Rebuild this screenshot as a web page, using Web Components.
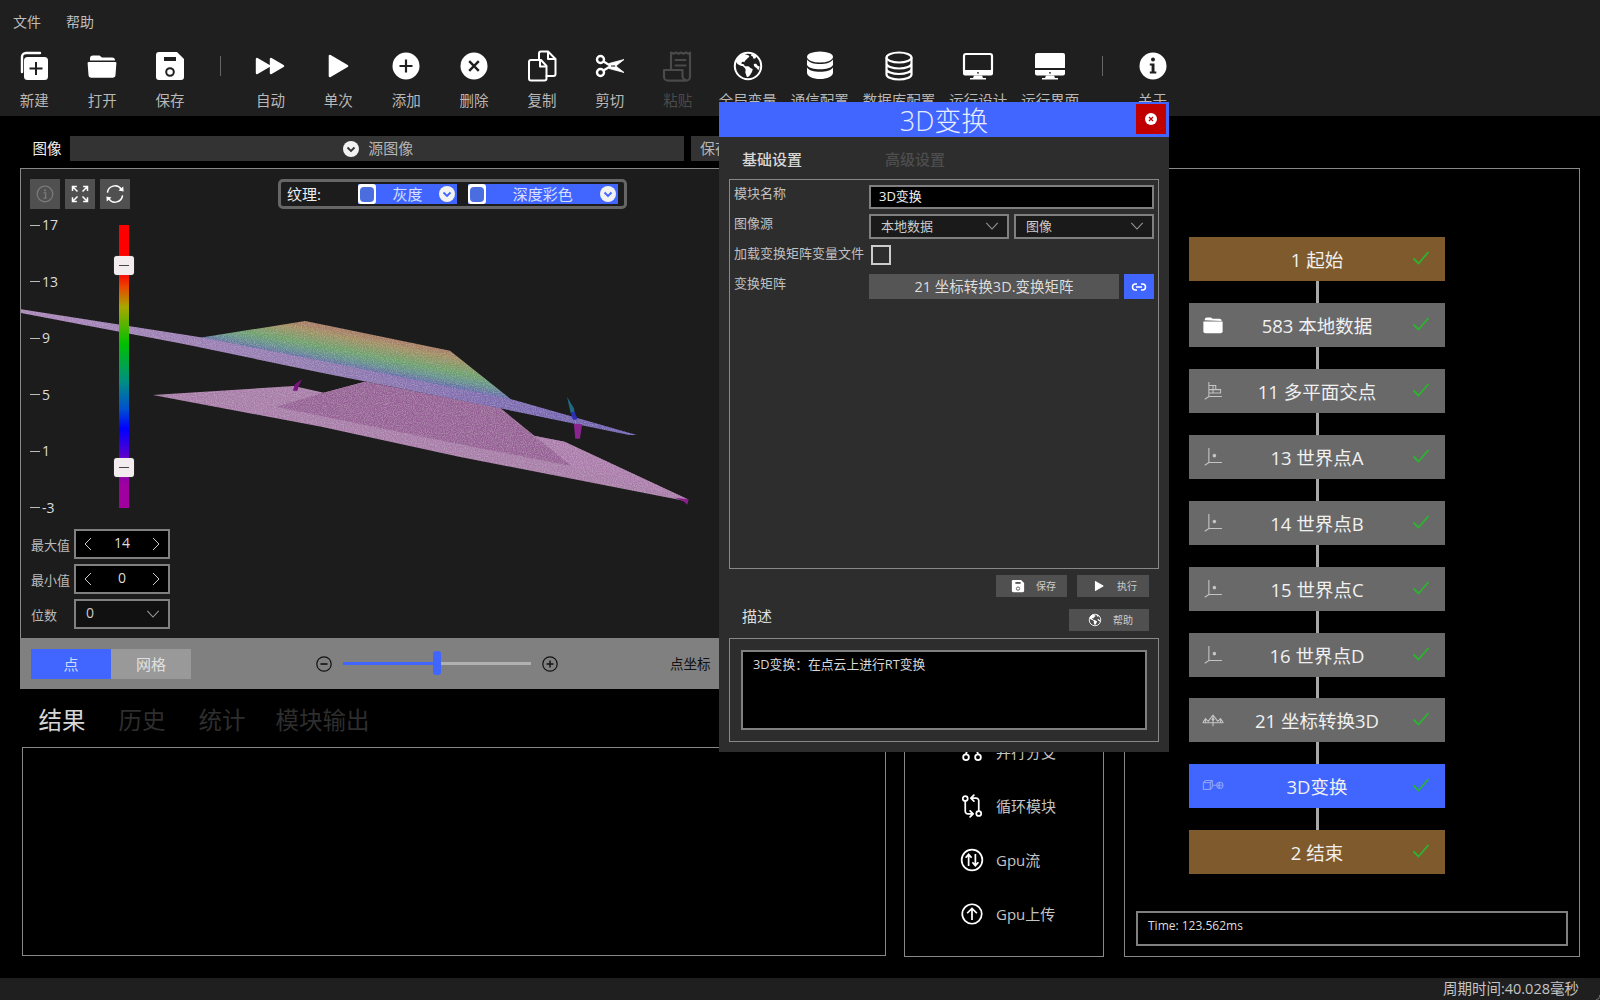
<!DOCTYPE html>
<html lang="zh-CN">
<head>
<meta charset="utf-8">
<title>3D变换</title>
<style>
html,body{margin:0;padding:0;height:100%;background:#000;overflow:hidden}
body{font-family:"Open Sans","Noto Sans CJK SC",sans-serif;color:#ccc}
</style>
</head>
<body>
<app-shell>
  <app-menu><span>文件</span><span>帮助</span></app-menu>
  <app-toolbar>
    <tool-btn icon="new" label="新建"></tool-btn>
    <tool-btn icon="open" label="打开"></tool-btn>
    <tool-btn icon="save" label="保存"></tool-btn>
    <tool-sep></tool-sep>
    <tool-btn icon="auto" label="自动"></tool-btn>
    <tool-btn icon="play" label="单次"></tool-btn>
    <tool-btn icon="add" label="添加"></tool-btn>
    <tool-btn icon="del" label="删除"></tool-btn>
    <tool-btn icon="copy" label="复制"></tool-btn>
    <tool-btn icon="cut" label="剪切"></tool-btn>
    <tool-btn icon="paste" label="粘贴" dim></tool-btn>
    <tool-btn icon="globe" label="全局变量"></tool-btn>
    <tool-btn icon="dbfill" label="通信配置"></tool-btn>
    <tool-btn icon="db" label="数据库配置"></tool-btn>
    <tool-btn icon="mon" label="运行设计"></tool-btn>
    <tool-btn icon="monfill" label="运行界面"></tool-btn>
    <tool-sep></tool-sep>
    <tool-btn icon="info" label="关于"></tool-btn>
  </app-toolbar>
  <main-area>
    <left-col>
      <image-header></image-header>
      <image-panel></image-panel>
      <tab-strip><b>结果</b><span>历史</span><span>统计</span><span>模块输出</span></tab-strip>
      <result-box></result-box>
    </left-col>
    <module-list>
      <module-item icon="branch">并行分支</module-item>
      <module-item icon="loop">循环模块</module-item>
      <module-item icon="updown">Gpu流</module-item>
      <module-item icon="up">Gpu上传</module-item>
    </module-list>
    <flow-chart>
      <flow-node kind="brand">1 起始</flow-node>
      <flow-link></flow-link>
      <flow-node icon="folder">583 本地数据</flow-node>
      <flow-link></flow-link>
      <flow-node icon="multi">11 多平面交点</flow-node>
      <flow-link></flow-link>
      <flow-node icon="axis">13 世界点A</flow-node>
      <flow-link></flow-link>
      <flow-node icon="axis">14 世界点B</flow-node>
      <flow-link></flow-link>
      <flow-node icon="axis">15 世界点C</flow-node>
      <flow-link></flow-link>
      <flow-node icon="axis">16 世界点D</flow-node>
      <flow-link short></flow-link>
      <flow-node icon="coord">21 坐标转换3D</flow-node>
      <flow-link></flow-link>
      <flow-node kind="active" icon="cube">3D变换</flow-node>
      <flow-link></flow-link>
      <flow-node kind="brand">2 结束</flow-node>
    </flow-chart>
  </main-area>
  <status-bar>周期时间:40.028毫秒</status-bar>
  <transform-dialog></transform-dialog>
</app-shell>
<script>
const ICONS = {
  new:`<path d="M4 22V7a4 4 0 0 1 4-4h14" fill="none" stroke="currentColor" stroke-width="2.4" stroke-linecap="round"/><rect x="6" y="7" width="24" height="23" rx="3.5" fill="currentColor"/><path d="M18 12v13M11.5 18.5h13" stroke="var(--cut)" stroke-width="2"/>`,
  open:`<path d="M4 10.5V8.5a3 3 0 0 1 3-3h6.5l2.5 2h10a3 3 0 0 1 3 3z" fill="currentColor"/><path d="M2.6 12h26.8a1 1 0 0 1 1 1l-.9 12a3 3 0 0 1-3 2.8H5.5a3 3 0 0 1-3-2.8L1.6 13a1 1 0 0 1 1-1z" fill="currentColor"/>`,
  save:`<path d="M5 2h18l7 7v18a3 3 0 0 1-3 3H5a3 3 0 0 1-3-3V5a3 3 0 0 1 3-3z" fill="currentColor"/><rect x="10" y="7" width="12" height="4" fill="var(--cut)"/><circle cx="16" cy="22" r="3.8" fill="currentColor" stroke="var(--cut)" stroke-width="2"/>`,
  auto:`<path d="M3 9v14l12-7zM17 9v14l12-7z" fill="currentColor" stroke="currentColor" stroke-width="2.4" stroke-linejoin="round"/>`,
  play:`<path d="M8 6v20l17-10z" fill="currentColor" stroke="currentColor" stroke-width="2.6" stroke-linejoin="round"/>`,
  add:`<circle cx="16" cy="16" r="13.5" fill="currentColor"/><path d="M16 9.5v13M9.5 16h13" stroke="var(--cut)" stroke-width="2.2"/>`,
  del:`<circle cx="16" cy="16" r="13.5" fill="currentColor"/><path d="M11.2 11.2l9.6 9.6M20.8 11.2l-9.6 9.6" stroke="var(--cut)" stroke-width="2.4"/>`,
  copy:`<g fill="none" stroke="currentColor" stroke-width="2" stroke-linejoin="round" stroke-linecap="round"><path d="M13 10V3.5a2 2 0 0 1 2-2h7l7.5 7.5v15a2 2 0 0 1-2 2h-7"/><path d="M22 2v7h7"/><path d="M5 10h10l5.5 6v12.5a2 2 0 0 1-2 2H5a2 2 0 0 1-2-2V12a2 2 0 0 1 2-2z"/><path d="M14 10v6.5h6"/></g>`,
  cut:`<g fill="none" stroke="currentColor" stroke-width="2.4"><circle cx="6.500" cy="9.500" r="3.500"/><circle cx="6.500" cy="22.500" r="3.500"/></g><path d="M9.500 11.500L21 18.500M9.500 20.500L21 13.500" stroke="currentColor" stroke-width="2.200"/><path d="M15 13.500L30 9.500 20 17.500zM15 18.500L30 22.500 20 14.500z" fill="currentColor" stroke="currentColor" stroke-width=".8" stroke-linejoin="round"/><path d="M17 16h3" stroke="var(--cut)" stroke-width="1"/>`,
  paste:`<g fill="none" stroke="currentColor" stroke-width="2.2" stroke-linejoin="round"><path d="M9 20V2.5l2.5 1.2 2.5-1.2 2.5 1.2 2.5-1.2 2.5 1.2 2.5-1.2 2.5 1.2 1.5-1v24a4 4 0 0 1-4 4H6a4 4 0 0 1-4-4V20h18.5v6a4 4 0 0 0 4 4"/><path d="M13.5 10h10M13.5 15.5h10" stroke-linecap="round"/></g>`,
  globe:`<circle cx="16" cy="16" r="13.2" fill="var(--cut)" stroke="currentColor" stroke-width="2"/><path d="M11 3.5c-3 1.2-5.6 3.5-7.2 6.5 0 1.5.7 3.2 2 4.2.7.6 1.4.4 2.2 1.2l1.8.7c1.2 0 1.6.7 2.4 1.5.8.9 1.4 1.2 1.4 2.4 0 1-.4 1.7-.2 2.8.3 1.5 1 2.6 1.4 4 .5.4 1.4.2 2-.2 1-1 1.8-1.8 2.2-3 .1-.8.7-1 1-1.7.5-1.2.4-2 .8-2.8l-2-.8c-.9-.6-1.6-1.8-2.8-2-1.3-.3-2.2.4-3.2-.4-.6-.5-.9-1.5-1.7-1.8-.8-.2-1.5.2-1.7-.8-.1-1 .8-1.6 1.8-1.6l1.2.6c.4-.8.2-1.4 1.2-2.1.5-.5 1.2-1.2 1.6-1.8l1.2-.6 1-1.5c-.2-.6-1-1.2-2-1.4zM20 3.5c-.4.7-.8 1.2-1 1.9.6.7 1.6.7 2 1.3.3.4.1 1-.2 1.5.8.2 1.6.6 2.4.4l1.6-2.4c-1.4-1.2-3-2.2-4.8-2.7zM22 14c.8-.3 2-.4 2.6.2.6.5.7 1.3 1.5 1.8.5.3 1.2.2 1.6.5-.2 1.4-.6 2.6-1.4 3.7-.5-.4-.7-1.2-1.3-1.8-.9-1-2.8-1.4-3-2.7-.1-.7-.4-1.4 0-1.7z" fill="currentColor"/>`,
  dbfill:`<ellipse cx="16" cy="7" rx="13" ry="5.5" fill="currentColor"/><path d="M3 9.5c2 3.2 7 4.5 13 4.5s11-1.3 13-4.5v5.5c-1.6 3-7 4.3-13 4.3S4.6 18 3 15z" fill="currentColor"/><path d="M3 17.5c2 3 7 4.2 13 4.2s11-1.2 13-4.2v5C29 26.5 23 29 16 29S3 26.500 3 22.500z" fill="currentColor"/>`,
  db:`<g fill="none" stroke="currentColor" stroke-width="2.2"><ellipse cx="16" cy="7.500" rx="12.500" ry="5"/><path d="M3.500 7.500v17c0 2.800 5.600 5 12.500 5s12.500-2.200 12.500-5v-17M3.500 13.500c0 2.800 5.600 5 12.500 5s12.500-2.200 12.500-5M3.500 19c0 2.800 5.600 5 12.500 5s12.500-2.200 12.500-5"/></g>`,
  mon:`<rect x="2" y="4" width="28" height="19" rx="2" fill="none" stroke="currentColor" stroke-width="2.200"/><path d="M1 20h30v3.500a2 2 0 0 1-2 2H3a2 2 0 0 1-2-2z" fill="currentColor"/><path d="M12 25.500h8l1 2.500h3v1.500H8V28h3z" fill="currentColor"/><circle cx="16" cy="22.800" r=".9" fill="var(--cut)"/>`,
  monfill:`<path d="M3 3h26a2 2 0 0 1 2 2v13H1V5a2 2 0 0 1 2-2z" fill="currentColor"/><path d="M1 20h30v3.500a2 2 0 0 1-2 2H3a2 2 0 0 1-2-2z" fill="currentColor"/><path d="M12 25.500h8l1 2.500h3v1.500H8V28h3z" fill="currentColor"/><circle cx="16" cy="22.800" r=".9" fill="var(--cut)"/>`,
  info:`<circle cx="16" cy="16" r="13.500" fill="currentColor"/><circle cx="16" cy="9.500" r="2" fill="var(--cut)"/><path d="M12.800 13.500h4.700v8h1.800v2h-6.500v-2h1.800v-6h-1.800z" fill="var(--cut)"/>`,
  infoline:`<circle cx="16" cy="16" r="12.500" fill="none" stroke="currentColor" stroke-width="2"/><circle cx="16" cy="10" r="1.800" fill="currentColor"/><path d="M13.500 14h3.500v8h1.500M13.500 22.500h5" fill="none" stroke="currentColor" stroke-width="2"/>`,
  expand:`<g fill="none" stroke="currentColor" stroke-width="2.400"><path d="M4 11V4h7M4 4l8 8M28 11V4h-7M28 4l-8 8M4 21v7h7M4 28l8-8M28 21v7h-7M28 28l-8-8"/></g>`,
  sync:`<g fill="none" stroke="currentColor" stroke-width="2.200"><path d="M5 14a11 11 0 0 1 20-5M27 18a11 11 0 0 1-20 5"/></g><path d="M21 11l7.500 1.500L28 5zM11 21l-7.500-1.500L4 27z" fill="currentColor"/>`,
  branch:`<g fill="none" stroke="currentColor" stroke-width="2.400"><circle cx="8" cy="23" r="3.800"/><circle cx="24" cy="23" r="3.800"/><path d="M8 19c0-8 16-8 16 0M16 13V3"/></g>`,
  loop:`<g fill="none" stroke="currentColor" stroke-width="2.300" stroke-linecap="round" stroke-linejoin="round"><circle cx="7" cy="6" r="3.300"/><circle cx="25" cy="26" r="3.300"/><path d="M7 9.500V23a3.500 3.500 0 0 0 3.500 3.500H17M13.500 22.500l4 4-4 4M25 22.500V9a3.500 3.500 0 0 0-3.500-3.500H15M18.500 1.500l-4 4 4 4"/></g>`,
  updown:`<circle cx="16" cy="16" r="13.800" fill="none" stroke="currentColor" stroke-width="2.300"/><path d="M11.500 24V9M7.500 13l4-4.500 4 4.500M20.500 8v15M16.500 19l4 4.500 4-4.500" fill="none" stroke="currentColor" stroke-width="2.300"/>`,
  up:`<circle cx="16" cy="16" r="13" fill="none" stroke="currentColor" stroke-width="2.300"/><path d="M16 24V9M9.500 15l6.500-6.500 6.500 6.500" fill="none" stroke="currentColor" stroke-width="2.300"/>`,
  folder:`<path d="M4 9V8a3 3 0 0 1 3-3h6l2.500 2h10a3 3 0 0 1 3 3z" fill="currentColor"/><path d="M2 11h28v14a3 3 0 0 1-3 3H5a3 3 0 0 1-3-3z" fill="currentColor"/>`,
  axis:`<g fill="none" stroke="currentColor" stroke-width="1.600"><path d="M10 3v21M4 28l6-4h19"/></g><circle cx="18" cy="14" r="2.600" fill="currentColor"/>`,
  multi:`<g fill="none" stroke="currentColor" stroke-width="1.500"><path d="M10 3v21M4 28l6-4h19M10 8h10v6H10M10 14h17v5H10M16 8v11"/></g>`,
  coord:`<g fill="none" stroke="currentColor" stroke-width="1.500"><path d="M1 20l4-6 4 4 7-9 7 9 4-4 4 6M1 20h30M16 9v16M5 14v6M27 14v6"/></g><circle cx="16" cy="15" r="2" fill="currentColor"/>`,
  cube:`<g fill="none" stroke="currentColor" stroke-width="1.600"><rect x="2" y="11" width="10" height="10"/><path d="M2 11l3-3h10v10l-3 3M12 11l3-3M15 15h7"/><circle cx="26" cy="15" r="4.500"/><path d="M22 15h8M26 10.500c-2 3-2 6 0 9"/></g>`,
  link:`<g fill="none" stroke="currentColor" stroke-width="3"><path d="M12 10H9a6 6 0 0 0 0 12h3M20 10h3a6 6 0 0 1 0 12h-3M10 16h12"/></g>`
};
const icon = (n,s,extra='') => `<svg viewBox="0 0 32 32" width="${s}" height="${s}" style="display:block;flex:none;--cut:var(--cut-color,#1f1f1f);${extra}" aria-hidden="true">${ICONS[n]}</svg>`;
const chev = (s=16,c='currentColor') => `<svg viewBox="0 0 16 10" width="${s}" height="${s*10/16}" style="display:block;flex:none"><path d="M1.500 1l6.500 7 6.500-7" fill="none" stroke="${c}" stroke-width="1.200"/></svg>`;
const chevCircle = (d,c) => `<svg viewBox="0 0 16 16" width="${d}" height="${d}" style="display:block;flex:none"><circle cx="8" cy="8" r="8" fill="#f2f2f2"/><path d="M4.500 6.500L8 10l3.500-3.500" fill="none" stroke="${c}" stroke-width="1.800"/></svg>`;

function def(name, css, render){
  customElements.define(name, class extends HTMLElement{
    connectedCallback(){
      if(this.shadowRoot) return;
      const r=this.attachShadow({mode:'open'});
      r.innerHTML=`<style>${css}</style>`+render(this);
    }
  });
}

def('app-shell',`:host{display:flex;flex-direction:column;width:1600px;height:1000px;position:relative;overflow:hidden;background:#000}`,()=>`<slot></slot>`);

def('app-menu',`:host{display:flex;height:44px;background:#1f1f1f;padding-left:13px;gap:25px;align-items:center;font-size:14px;line-height:20px;color:#bdbdbd}`,()=>`<slot></slot>`);

def('app-toolbar',`:host{display:flex;height:72px;background:#1f1f1f;padding:6px 0 0 .4px;box-sizing:border-box}`,()=>`<slot></slot>`);

def('tool-btn',`:host{display:flex;flex-direction:column;align-items:center;min-width:67.900px;padding:0 7px;box-sizing:border-box;color:#fff;--cut-color:#1f1f1f}
:host([dim]){color:#4a4a4a}
span{margin-top:8px;font-size:14.500px;line-height:22px;color:#b8b8b8;white-space:nowrap}
:host([dim]) span{color:#4a4a4a}`,e=>`${icon(e.getAttribute('icon'),32)}<span>${e.getAttribute('label')}</span>`);

def('tool-sep',`:host{display:block;width:1px;height:20px;background:#666;margin:6px 15.500px 0 15.900px}`,()=>``);

def('main-area',`:host{display:flex;flex:1;padding:0 20px;min-height:0}`,()=>`<slot></slot>`);

def('left-col',`:host{display:flex;flex-direction:column;width:866px;margin-right:18px;padding-top:20px;box-sizing:border-box}`,()=>`<slot></slot>`);

def('image-header',`:host{display:flex;height:25px;margin-bottom:7px;font-size:14.500px;line-height:25px}
.t{width:50px;padding-left:12.500px;box-sizing:border-box;color:#f0f0f0}
.bar{background:#333;color:#b5b5b5;display:flex;align-items:center;justify-content:center;gap:9px;height:25px;font-size:15px}
.a{width:613.500px;padding-left:3px;box-sizing:border-box}
.b{width:195px;margin-left:7.500px;justify-content:flex-start;padding-left:9px;box-sizing:border-box}`,()=>`<div class="t">图像</div><div class="bar a">${chevCircle(16,'#333')}<span>源图像</span></div><div class="bar b"><span>保存</span></div>`);

def('tex-select',`:host{display:flex;align-items:center;height:20px;background:#4066ff;color:#d9e0ff;font-size:15px;line-height:20px}
.sq{width:18px;height:20px;background:#fff;border-radius:3px;display:flex;align-items:center;justify-content:center;flex:none}
.sq i{display:block;width:14px;height:15px;background:#4a6ee0;border-radius:4px}
span{flex:1;text-align:center}
.c{margin-right:2px}`,e=>`<div class="sq"><i></i></div><span><slot></slot></span><div class="c">${chevCircle(16,'#4066ff')}</div>`);

def('spin-box',`:host{display:flex;align-items:center;height:30px;width:96px;box-sizing:border-box;border:2px solid #808080;background:#000;color:#ddd;font-size:14px;line-height:20px}
span{flex:1;text-align:center;position:relative;top:-1px}
svg{display:block;flex:none;margin:0 8px}`,e=>`<svg width="8" height="14" viewBox="0 0 8 14"><path d="M7 1L1 7l6 6" fill="none" stroke="#ccc"/></svg><span><slot></slot></span><svg width="8" height="14" viewBox="0 0 8 14"><path d="M1 1l6 6-6 6" fill="none" stroke="#ccc"/></svg>`);

def('combo-box',`:host{display:flex;align-items:center;justify-content:space-between;box-sizing:border-box;border:2px solid #808080;background:var(--combo-bg,#1a1a1a);height:var(--combo-h,25px);padding:0 8px 0 var(--combo-pl,10px);font-size:var(--combo-fs,13px);line-height:18px;color:#ccc}
span{position:relative;top:-1px}`,e=>`<span><slot></slot></span>${chev(14,'#9a9a9a')}`);

def('cloud-view',`:host{position:absolute;left:0;top:0;width:864px;height:469px;display:block}`,()=>{
  const P=a=>a.map(([x,y])=>`${(x/2.178).toFixed(1)},${(200+y/3).toFixed(1)}`).join(' ');
  return `<svg viewBox="21 169 864 469" width="864" height="469" style="display:block">
  <defs>
  <filter id="n" x="0" y="0" width="100%" height="100%"><feTurbulence type="fractalNoise" baseFrequency=".9" numOctaves="2" seed="4" result="t"/><feColorMatrix in="t" type="matrix" values="0 0 0 0 1  0 0 0 0 1  0 0 0 0 1  .4 0 0 0 -.15" result="w"/><feComposite in="w" in2="SourceAlpha" operator="in" result="c"/><feMerge><feMergeNode in="SourceGraphic"/><feMergeNode in="c"/></feMerge></filter>
  <linearGradient id="up" gradientUnits="userSpaceOnUse" x1="367" y1="336" x2="358.500" y2="380">
    <stop offset="0" stop-color="#a67c5e"/><stop offset=".12" stop-color="#a08e5e"/><stop offset=".42" stop-color="#6ca06a"/><stop offset=".6" stop-color="#62908e"/><stop offset=".8" stop-color="#6464ae"/><stop offset="1" stop-color="#7c6ab2"/>
  </linearGradient>
  <linearGradient id="st" gradientUnits="userSpaceOnUse" x1="21" y1="310" x2="637" y2="435">
    <stop offset="0" stop-color="#a884b8"/><stop offset=".5" stop-color="#9078b0"/><stop offset="1" stop-color="#6c5cb0"/>
  </linearGradient>
  </defs>
  <g filter="url(#n)">
  <polygon fill="#a87ca8" points="${P([[333,585],[640,558],[705,578],[795,545],[1090,625],[1163,707],[1230,725],[1498,898],[1490,902],[1000,770],[700,680]])}"/>
  <polygon fill="#965f95" points="${P([[600,620],[705,578],[795,545],[1090,625],[1245,798],[1000,733]])}"/>
  <polygon fill="#ad7bae" opacity=".6" points="${P([[1163,707],[1230,725],[1498,898],[1245,798]])}"/>
  <polygon fill="url(#up)" points="${P([[415,418],[665,363],[980,452],[1115,600],[1108,612],[700,510]])}"/>
  <polygon fill="url(#st)" points="${P([[45,328],[430,410],[720,488],[1120,600],[1387,705],[1370,705],[1100,628],[700,518],[400,432],[45,339]])}"/>
  </g>
  <polygon fill="#7b1480" points="${P([[638,572],[642,553],[658,538],[650,560],[648,572]])}"/>
  <polygon fill="#1f6a80" points="${P([[1235,590],[1250,625],[1252,640],[1243,640]])}"/>
  <polygon fill="#2a30b0" points="${P([[1243,636],[1252,636],[1258,658],[1248,660]])}"/>
  <polygon fill="#8a2590" points="${P([[1250,672],[1268,672],[1263,716],[1253,716]])}"/>
  <polygon fill="#8a1f8c" points="${P([[1470,893],[1500,898],[1497,914],[1490,905]])}"/>
  </svg>`;
});

def('scale-bar',`:host{display:flex;height:303px;margin-top:6px}
.ticks{display:flex;flex-direction:column;justify-content:space-between;width:89px}
.tk{display:flex;align-items:center;height:20px;font-size:14px;line-height:20px;color:#ddd}
.tk i{display:block;width:10px;height:1px;background:#bbb;margin-right:2px}
.bar{position:relative;width:10px;height:283px;margin-top:10px;background:linear-gradient(#f00 0,#f00 17%,#e84800 22%,#a8a800 29%,#00c000 42%,#009080 55%,#0050d0 65%,#0000ff 72%,#7000c0 84%,#a000a0 92%,#a000a0 100%)}
.h{position:absolute;left:-5px;width:20px;height:19px;background:#f3ecef;border-radius:3px;box-shadow:0 0 1px #888;display:flex;align-items:center;justify-content:center}
.h i{display:block;width:10px;height:1px;background:#444}`,()=>{
  const t=['17','13','9','5','1','-3'].map(v=>`<div class="tk"><i></i>${v}</div>`).join('');
  return `<div class="ticks">${t}</div><div class="bar"><div class="h" style="top:31px"><i></i></div><div class="h" style="top:233px"><i></i></div></div>`;
});

def('icon-btn',`:host{display:flex;align-items:center;justify-content:center;width:30px;height:30px;background:#505050;color:#fff;--cut-color:#505050}
:host([dim]){color:#7a7a7a}`,e=>icon(e.getAttribute('icon'),e.getAttribute('size')||22));

def('image-panel',`:host{display:flex;flex-direction:column;height:521px}
.body{position:relative;flex:1;background:#1c1c1c;border:1px solid #888;border-bottom:0;padding:10px 0 0 9px;box-sizing:border-box}
.over{position:relative}
.top{display:flex;align-items:center}
.btns{display:flex;gap:5px}
.tex{margin-left:147.500px;width:349px;height:30px;box-sizing:border-box;border:3px solid #666;border-radius:5px;display:flex;align-items:center;font-size:15px;line-height:20px;color:#eee;padding-left:6.500px}
.tex b{font-weight:400;width:71px}
.s2{margin-left:11px}
tex-select:nth-of-type(1){width:99px}
tex-select:nth-of-type(2){width:149.500px}
.rows{display:flex;flex-direction:column;gap:5px;margin-top:11px}
.r{display:flex;align-items:center;font-size:13px;line-height:18px;color:#bbb}
.r label{width:44px;padding-left:1px;box-sizing:border-box;position:relative;top:1px}
combo-box{width:96px;--combo-h:30px;--combo-bg:#111;--combo-fs:14px;--combo-pl:10px}
.foot{height:51px;background:#808080;display:flex;align-items:center;padding-left:11px;flex:none}
.seg{width:80px;height:30px;display:flex;align-items:center;justify-content:center;font-size:15px;line-height:20px;color:#e0e0e0}
.seg.on{background:#4066ff;color:#cfd8ff}
.seg.off{background:#999}
.sl{position:relative;width:188px;height:3px;background:#b0b0b0;margin:0 11px}
.sl i{position:absolute;left:0;top:0;height:3px;width:94px;background:#4066ff}
.sl b{position:absolute;left:90px;top:-11px;width:8px;height:24px;border-radius:3px;background:#4066ff}
.cc{display:block;flex:none}
.pt{margin-left:112px;color:#111;font-size:13.500px;line-height:20px}`,()=>`
<div class="body">
  <cloud-view></cloud-view>
  <div class="over">
    <div class="top">
      <div class="btns"><icon-btn icon="infoline" dim size="20"></icon-btn><icon-btn icon="expand" size="20"></icon-btn><icon-btn icon="sync" size="22"></icon-btn></div>
      <div class="tex"><b>纹理:</b><tex-select>灰度</tex-select><tex-select class="s2">深度彩色</tex-select></div>
    </div>
    <scale-bar></scale-bar>
    <div class="rows">
      <div class="r"><label>最大值</label><spin-box>14</spin-box></div>
      <div class="r"><label>最小值</label><spin-box>0</spin-box></div>
      <div class="r"><label>位数</label><combo-box>0</combo-box></div>
    </div>
  </div>
</div>
<div class="foot">
  <div class="seg on">点</div><div class="seg off">网格</div>
  <svg class="cc" style="margin-left:125px" width="16" height="16" viewBox="0 0 16 16"><circle cx="8" cy="8" r="7.200" fill="none" stroke="#111" stroke-width="1.200"/><path d="M4.500 8h7" stroke="#111" stroke-width="1.600"/></svg>
  <div class="sl"><i></i><b></b></div>
  <svg class="cc" width="16" height="16" viewBox="0 0 16 16"><circle cx="8" cy="8" r="7.200" fill="none" stroke="#111" stroke-width="1.200"/><path d="M4.500 8h7M8 4.500v7" stroke="#111" stroke-width="1.400"/></svg>
  <div class="pt">点坐标</div>
</div>`);

def('tab-strip',`:host{display:flex;height:58px;box-sizing:border-box;padding:14px 0 0 18.500px;gap:33px;font-size:23.500px;line-height:34px;color:#2e2e2e}
::slotted(b){font-weight:400;color:#d6d6d6}
::slotted(span:last-child){margin-left:-3px}`,()=>`<slot></slot>`);

def('result-box',`:host{display:block;height:209px;margin-left:2px;box-sizing:border-box;border:1px solid #888;background:#000}`,()=>``);

def('module-list',`:host{display:flex;flex-direction:column;justify-content:flex-end;width:200px;box-sizing:border-box;margin:52px 20px 21px 0;border:1px solid #888;padding:0 0 15px 55px}`,()=>`<slot></slot>`);

def('module-item',`:host{display:flex;align-items:center;height:54px;gap:12px;font-size:15px;line-height:20px;color:#c4c4c4}
svg{color:#fff}`,e=>`${icon(e.getAttribute('icon'),24)}<span><slot></slot></span>`);

def('flow-chart',`:host{display:flex;flex-direction:column;width:456px;box-sizing:border-box;margin:52px 0 21px;border:1px solid #888;padding:68px 0 10px 0}
.n{display:flex;flex-direction:column;align-items:flex-start;padding-left:64px}
.t{margin:auto 0 0 11px;width:432px;height:35px;box-sizing:border-box;border:2px solid #808080;padding:4px 10px;font-size:12px;line-height:18px;color:#ddd}`,()=>`<div class="n"><slot></slot></div><div class="t">Time: 123.562ms</div>`);

def('flow-node',`:host{display:grid;grid-template-columns:48px 1fr 48px;align-items:center;width:256px;height:44px;background:#696969;color:#f0f0f0;font-size:18.500px;line-height:26px}
:host([kind=brand]){background:#7f5a2d}
:host([kind=active]){background:#4066ff}
.i{display:flex;justify-content:center;color:#c4c4c4}
:host([kind=active]) .i{color:#8ea2f5}
:host([icon=folder]) .i{color:#fff}
.c{text-align:center;white-space:nowrap;padding-top:1.500px}
.k{display:flex;justify-content:center;margin-top:-3px}`,e=>{
  const n=e.getAttribute('icon');
  return `<div class="i">${n?icon(n,22):''}</div><div class="c"><slot></slot></div><div class="k"><svg width="18" height="14" viewBox="0 0 18 14"><path d="M1.500 7.500l5 5L16.500 1" fill="none" stroke="#2bb52f" stroke-width="1.800"/></svg></div>`;
});

def('flow-link',`:host{display:block;width:3px;height:22px;background:#a8a8a8;margin-left:126.500px}
:host([short]){height:21px}`,()=>``);

def('status-bar',`:host{display:flex;justify-content:flex-end;align-items:center;height:22px;flex:none;background:#1f1f1f;padding-right:21px;font-size:14.500px;line-height:22px;color:#c4c4c4;position:relative}
:host::after{content:"";position:absolute;right:0;bottom:0;width:4px;height:5px;border-right:1px solid #666;border-bottom:1px solid #666;border-bottom-right-radius:5px;box-sizing:border-box}`,()=>`<slot></slot>`);

def('small-btn',`:host{display:flex;align-items:center;gap:11px;height:22px;box-sizing:border-box;padding-left:var(--pl,15px);background:#505050;font-size:10px;line-height:14px;color:#ccc;--cut-color:#505050}
svg{color:#fff}`,e=>`${icon(e.getAttribute('icon'),14)}<span><slot></slot></span>`);

def('transform-dialog',`:host{position:absolute;left:719px;top:102px;width:450px;height:650px;background:#2d2d2d;display:flex;flex-direction:column;color:#ccc}
.title{position:relative;height:35px;background:#4066ff;color:#e8ecff;font-size:27px;line-height:38px;text-align:center;flex:none;font-weight:300}
.x{position:absolute;right:3px;top:2px;width:30px;height:30px;background:#c00000;display:flex;align-items:center;justify-content:center}
.tabs{height:42px;box-sizing:border-box;padding:2px 0 0 23px;display:flex;align-items:center;gap:83px;font-size:15px;line-height:20px;flex:none}
.tabs b{font-weight:500;color:#d8d8d8}
.tabs span{color:#4e4e4e;font-weight:500}
.box{margin:0 10px;border:1px solid #888;box-sizing:border-box;height:389.500px;padding:5px 4px 0;flex:none}
.row{display:grid;grid-template-columns:135px 1fr;font-size:13px;line-height:16px;color:#c0c0c0;margin-bottom:5px}
.input{height:24px;box-sizing:border-box;border:2px solid #808080;background:#000;color:#eee;padding-left:8px;line-height:19px}
.two{display:flex;gap:5px}
.two combo-box{flex:1;--combo-pl:10px}
.chk{width:20px;height:20px;box-sizing:border-box;border:2px solid #ccc;margin-left:2px}
.ref{display:flex;gap:5px}
.ref div:first-child{flex:1;height:25px;background:#555;text-align:center;font-size:14.500px;line-height:26px;color:#ddd}
.lnk{width:30px;height:25px;background:#4066ff;display:flex;align-items:center;justify-content:center;color:#fff}
.acts{display:flex;justify-content:flex-end;gap:10px;margin:6px 20px 0 0;flex:none}
.desc{display:flex;justify-content:space-between;align-items:flex-start;margin:12px 20px 0 23px;flex:none;font-size:15px;line-height:20px;color:#ddd}
.desc span{margin-top:-3px}
.box2{margin:7.500px 10px 0;border:1px solid #888;box-sizing:border-box;height:104px;padding:11px;flex:none}
.ta{height:80px;box-sizing:border-box;border:2px solid #808080;background:#000;padding:3px 10px;font-size:12.800px;line-height:18px;color:#d8d8d8}`,()=>`
<div class="title">3D变换<div class="x"><svg width="12" height="12" viewBox="0 0 12 12"><circle cx="6" cy="6" r="6" fill="#fff"/><path d="M4 4l4 4M8 4l-4 4" stroke="#c00000" stroke-width="1.200"/></svg></div></div>
<div class="tabs"><b>基础设置</b><span>高级设置</span></div>
<div class="box">
  <div class="row"><div>模块名称</div><div class="input">3D变换</div></div>
  <div class="row"><div style="padding-top:1px">图像源</div><div class="two"><combo-box>本地数据</combo-box><combo-box>图像</combo-box></div></div>
  <div class="row" style="margin-top:6px;margin-bottom:9px"><div>加载变换矩阵变量文件</div><div class="chk"></div></div>
  <div class="row"><div style="padding-top:1px">变换矩阵</div><div class="ref"><div>21 坐标转换3D.变换矩阵</div><div class="lnk">${icon('link',16)}</div></div></div>
</div>
<div class="acts"><small-btn icon="save" style="width:71px">保存</small-btn><small-btn icon="play" style="width:72px">执行</small-btn></div>
<div class="desc"><span>描述</span><small-btn icon="globe" style="width:80px;--pl:19px">帮助</small-btn></div>
<div class="box2"><div class="ta">3D变换：在点云上进行RT变换</div></div>`);
</script>
</body>
</html>
